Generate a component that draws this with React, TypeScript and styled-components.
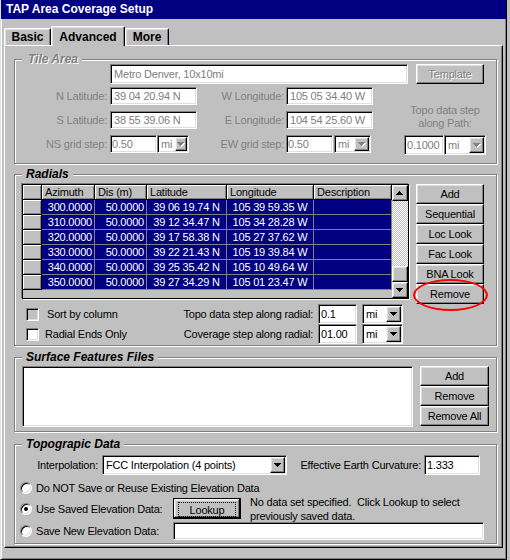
import React from "react";
import styled, { createGlobalStyle, css } from "styled-components";

const GlobalStyle = createGlobalStyle`
  html, body { margin: 0; padding: 0; background: #c0c0c0; }
  body { font-family: "Liberation Sans", Arial, sans-serif; font-size: 11px; color: #000; letter-spacing: -0.2px; }
  *, *::before, *::after { box-sizing: border-box; }
`;

const FONT = `"Liberation Sans", Arial, sans-serif`;

const raised = css`
  border: 1px solid;
  border-color: #fff #000 #000 #fff;
  box-shadow: inset -1px -1px 0 #808080, inset 1px 1px 0 #dfdfdf;
`;

const sunken = css`
  border: 1px solid;
  border-color: #808080 #fff #fff #808080;
  box-shadow: inset 1px 1px 0 #000, inset -1px -1px 0 #dfdfdf;
`;

const Window = styled.div`
  width: 507px;
  height: 560px;
  display: flex;
  flex-direction: column;
  background: #c0c0c0;
  border-left: 1px solid #dfdfdf;
  border-right: 1px solid #000;
  border-bottom: 1px solid #000;
  box-shadow: inset 1px 0 0 #fff, inset -1px -1px 0 #808080;
`;

const TitleBar = styled.div`
  height: 19px;
  padding-left: 5px;
  background: #000080;
  color: #fff;
  font: bold 12px/19px ${FONT};
  letter-spacing: 0;
`;

const Client = styled.div`
  padding: 0 3px;
`;

const TabStrip = styled.div`
  height: 26px;
  display: flex;
  align-items: flex-end;
`;

const Tab = styled.div<{ $active?: boolean; $w: number }>`
  position: relative;
  z-index: ${(p) => (p.$active ? 1 : 0)};
  width: ${(p) => p.$w}px;
  height: ${(p) => (p.$active ? 20 : 17)}px;
  margin-bottom: ${(p) => (p.$active ? -1 : 0)}px;
  background: #c0c0c0;
  border-top: 1px solid #fff;
  border-left: 1px solid #fff;
  border-right: 1px solid #000;
  border-radius: 2px 2px 0 0;
  box-shadow: inset -1px 0 0 #808080, inset 1px 1px 0 #dfdfdf;
  display: flex;
  align-items: center;
  justify-content: center;
  font: bold 12px ${FONT};
  letter-spacing: 0;
`;

const Panel = styled.div`
  border: 1px solid;
  border-color: #fff #000 #000 #fff;
  box-shadow: inset -1px -1px 0 #808080;
  padding: 13px 5px 3px 9px;
  display: flex;
  flex-direction: column;
`;

const Group = styled.div<{ $mt?: number }>`
  position: relative;
  margin-top: ${(p) => p.$mt ?? 0}px;
  border: 1px solid #808080;
  box-shadow: inset 1px 1px 0 #fff, 1px 1px 0 #fff;
`;

const Legend = styled.span<{ $disabled?: boolean }>`
  position: absolute;
  top: -8px;
  left: 7px;
  padding: 0 4px 0 ${(p) => (p.$disabled ? 6 : 4)}px;
  background: #c0c0c0;
  font: italic bold 12px/14px ${FONT};
  letter-spacing: 0;
  color: ${(p) => (p.$disabled ? "#808080" : "#000")};
  text-shadow: ${(p) => (p.$disabled ? "1px 1px 0 #fff" : "none")};
  white-space: nowrap;
`;

/* ---------- generic controls ---------- */

const Field = styled.input<{ $w: number; $h?: number; $muted?: boolean; $px?: number }>`
  ${sunken};
  width: ${(p) => p.$w}px;
  height: ${(p) => p.$h ?? 20}px;
  margin: 0;
  padding: 0 ${(p) => p.$px ?? 3}px;
  background: #fff;
  font: 11px ${FONT};
  letter-spacing: -0.2px;
  color: ${(p) => (p.$muted ? "#808080" : "#000")};
  outline: none;
  flex: none;
`;

const Combo = styled.div<{ $w: number; $h?: number; $muted?: boolean }>`
  ${sunken};
  width: ${(p) => p.$w}px;
  height: ${(p) => p.$h ?? 20}px;
  padding: 1px;
  background: #fff;
  display: flex;
  align-items: stretch;
  flex: none;
  color: ${(p) => (p.$muted ? "#808080" : "#000")};
`;

const ComboText = styled.span`
  flex: 1;
  padding-left: 2px;
  display: flex;
  align-items: center;
  white-space: nowrap;
  overflow: hidden;
`;

const DropBtn = styled.span<{ $w?: number }>`
  ${raised};
  width: ${(p) => p.$w ?? 16}px;
  background: #c0c0c0;
  display: flex;
  align-items: center;
  justify-content: center;
  flex: none;
`;

const Arrow = ({ up, muted }: { up?: boolean; muted?: boolean }) => (
  <svg width="8" height="5" viewBox="0 0 8 5" shapeRendering="crispEdges">
    {muted && (
      <polygon points={up ? "1,5 8,5 4.5,1" : "1,1 8,1 4.5,5"} fill="#fff" />
    )}
    <polygon
      points={up ? "0,4 7,4 3.5,0" : "0,0 7,0 3.5,4"}
      fill={muted ? "#808080" : "#000"}
    />
  </svg>
);

const Select = ({
  w,
  h,
  value,
  muted,
  btn,
}: {
  w: number;
  h?: number;
  value: string;
  muted?: boolean;
  btn?: number;
}) => (
  <Combo $w={w} $h={h} $muted={muted}>
    <ComboText>{value}</ComboText>
    <DropBtn $w={btn}>
      <Arrow muted={muted} />
    </DropBtn>
  </Combo>
);

const Button = styled.button<{ $w?: number; $disabled?: boolean }>`
  ${raised};
  width: ${(p) => (p.$w ? `${p.$w}px` : "100%")};
  height: 20px;
  margin: 0;
  padding: 0;
  background: #c0c0c0;
  font: 11px ${FONT};
  letter-spacing: -0.2px;
  color: ${(p) => (p.$disabled ? "#808080" : "#000")};
  text-shadow: ${(p) => (p.$disabled ? "1px 1px 0 #fff" : "none")};
  flex: none;
`;

const DefaultButton = styled.button`
  width: 68px;
  height: 21px;
  margin: 0;
  padding: 2px;
  border: 1px solid #000;
  background: #c0c0c0;
  box-shadow: inset -1px -1px 0 #000, inset 1px 1px 0 #fff, inset -2px -2px 0 #808080,
    inset 2px 2px 0 #dfdfdf;
  font: 11px ${FONT};
  letter-spacing: -0.2px;
  flex: none;
`;

const FocusRing = styled.span`
  display: flex;
  align-items: center;
  justify-content: center;
  margin: 1px 2px 0 2px;
  border: 1px dotted #000;
  height: 15px;
`;

const Label = styled.span<{ $w?: number; $pr?: number; $muted?: boolean }>`
  ${(p) => (p.$w ? `width: ${p.$w}px;` : "")}
  padding-right: ${(p) => p.$pr ?? 0}px;
  text-align: right;
  white-space: nowrap;
  color: ${(p) => (p.$muted ? "#808080" : "#000")};
  flex: none;
`;

const CheckBox = styled.span<{ $bg?: string }>`
  ${sunken};
  width: 13px;
  height: 13px;
  background: ${(p) => p.$bg ?? "#fff"};
  flex: none;
`;

const RadioDot = styled.span<{ $on?: boolean }>`
  width: 12px;
  height: 12px;
  border-radius: 50%;
  border: 1px solid;
  border-color: #808080 #fff #fff #808080;
  box-shadow: inset 1px 1px 0 #000, inset -1px -1px 0 #dfdfdf;
  background: #fff;
  display: flex;
  align-items: center;
  justify-content: center;
  flex: none;
  &::after {
    content: "";
    width: 4px;
    height: 4px;
    border-radius: 50%;
    background: ${(p) => (p.$on ? "#000" : "transparent")};
  }
`;

/* ---------- Tile Area ---------- */

const TileGrid = styled.div`
  display: grid;
  grid-template-columns: 95px 87px 89px 87px 1fr;
  grid-template-rows: 23px 24px 24px 20px;
  align-items: start;
  padding: 4px 0 8px 0;
`;

const GridLabel = styled(Label)`
  line-height: 18px;
`;

const Inline = styled.div<{ $gap?: number; $span?: string }>`
  display: flex;
  align-items: center;
  gap: ${(p) => p.$gap ?? 0}px;
  ${(p) => (p.$span ? `grid-column: ${p.$span};` : "")}
`;

const PathBlock = styled.div`
  grid-column: 5;
  grid-row: 2 / span 3;
  align-self: stretch;
  padding-left: 21px;
  display: flex;
  flex-direction: column;
  align-items: center;
  justify-content: flex-end;
`;

const PathCaption = styled.div`
  color: #808080;
  text-align: center;
  line-height: 13px;
  margin-bottom: 5px;
`;

/* ---------- Radials ---------- */

const RadialsTop = styled.div`
  display: flex;
  padding: 9px 0 0 7px;
`;

const GridBox = styled.div`
  width: 387px;
  height: 115px;
  border: 1px solid #000;
  box-shadow: -1px -1px 0 #808080, 1px 1px 0 #fff;
  background: #c0c0c0;
  display: flex;
`;

const Table = styled.div`
  flex: 1;
  display: grid;
  grid-template-columns: 19px 53px 52px 80px 87px 78px;
  grid-auto-rows: 15px;
  align-content: start;
`;

const HeadCell = styled.div`
  border-right: 1px solid #000;
  border-bottom: 1px solid #000;
  box-shadow: inset 1px 1px 0 #fff, inset -1px -1px 0 #808080;
  padding-left: 3px;
  line-height: 14px;
  white-space: nowrap;
  overflow: hidden;
`;

const RowHead = styled.div`
  border-right: 1px solid #000;
  border-bottom: 1px solid #000;
  box-shadow: inset 1px 1px 0 #fff, inset -1px -1px 0 #808080;
`;

const Cell = styled.div<{ $align: "right" | "center" | "left" }>`
  background: #000080;
  color: #fff;
  border-right: 1px solid #808080;
  border-bottom: 1px solid #808080;
  line-height: 14px;
  text-align: ${(p) => p.$align};
  padding: 0 2px;
  white-space: nowrap;
  overflow: hidden;
`;

const ScrollBar = styled.div`
  width: 16px;
  display: flex;
  flex-direction: column;
`;

const ScrollBtn = styled.div`
  ${raised};
  height: 16px;
  background: #c0c0c0;
  display: flex;
  align-items: center;
  justify-content: center;
  flex: none;
`;

const Track = styled.div`
  flex: 1;
  background-color: #c0c0c0;
  background-image: conic-gradient(#fff 25%, #c0c0c0 0 50%, #fff 0 75%, #c0c0c0 0);
  background-size: 2px 2px;
`;

const SideButtons = styled.div<{ $w: number; $ml: number }>`
  width: ${(p) => p.$w}px;
  margin-left: ${(p) => p.$ml}px;
  display: flex;
  flex-direction: column;
`;

const Circled = styled.div`
  position: relative;
`;

const RedEllipse = styled.span`
  position: absolute;
  left: -3px;
  top: -5px;
  width: 75px;
  height: 32px;
  border: 2px solid #f00;
  border-radius: 50%;
  pointer-events: none;
`;

const Options = styled.div`
  display: flex;
  padding: 0 0 1px 11px;
`;

const CheckCol = styled.div`
  width: 150px;
  display: flex;
  flex-direction: column;
`;

const CheckRow = styled.div<{ $gap: number }>`
  height: 20px;
  display: flex;
  align-items: center;
  gap: ${(p) => p.$gap}px;
  white-space: nowrap;
`;

const StepGrid = styled.div`
  display: grid;
  grid-template-columns: 137px 39px 41px;
  grid-auto-rows: 20px;
  column-gap: 5px;
  align-items: center;
`;

/* ---------- Surface features ---------- */

const SurfaceBody = styled.div`
  display: flex;
  padding: 8px 0 4px 7px;
`;

const ListBox = styled.div`
  ${sunken};
  width: 391px;
  height: 61px;
  background: #fff;
`;

/* ---------- Topographic ---------- */

const TopoBody = styled.div`
  padding: 10px 0 3px 0;
  display: flex;
  flex-direction: column;
`;

const Row = styled.div<{ $h: number; $mt?: number; $pl?: number }>`
  height: ${(p) => p.$h}px;
  margin-top: ${(p) => p.$mt ?? 0}px;
  padding-left: ${(p) => p.$pl ?? 0}px;
  display: flex;
  align-items: center;
  white-space: nowrap;
`;

const RadioText = styled.span<{ $w?: number }>`
  margin-left: 4px;
  ${(p) => (p.$w ? `width: ${p.$w}px;` : "")}
  flex: none;
`;

const Note = styled.div`
  margin-left: 9px;
  line-height: 14px;
  white-space: pre;
`;

const radials = [
  ["300.0000", "50.0000", "39 06 19.74 N", "105 39 59.35 W"],
  ["310.0000", "50.0000", "39 12 34.47 N", "105 34 28.28 W"],
  ["320.0000", "50.0000", "39 17 58.38 N", "105 27 37.62 W"],
  ["330.0000", "50.0000", "39 22 21.43 N", "105 19 39.84 W"],
  ["340.0000", "50.0000", "39 25 35.42 N", "105 10 49.64 W"],
  ["350.0000", "50.0000", "39 27 34.29 N", "105 01 23.47 W"],
];

export default function App() {
  return (
    <>
      <GlobalStyle />
      <Window>
        <TitleBar>TAP Area Coverage Setup</TitleBar>
        <Client>
          <TabStrip>
            <Tab $w={47}>Basic</Tab>
            <Tab $w={74} $active>
              Advanced
            </Tab>
            <Tab $w={44}>More</Tab>
          </TabStrip>
          <Panel>
            {/* Tile Area */}
            <Group>
              <Legend $disabled>Tile Area</Legend>
              <TileGrid>
                <span />
                <Inline $span="2 / span 4" $gap={8}>
                  <Field $w={298} $muted readOnly value="Metro Denver, 10x10mi" />
                  <Button $w={68} $disabled>
                    Template
                  </Button>
                </Inline>

                <GridLabel $muted $pr={3}>N Latitude:</GridLabel>
                <Field $w={87} $h={18} $muted readOnly value="39 04 20.94 N" />
                <GridLabel $muted $pr={2}>W Longitude:</GridLabel>
                <Field $w={87} $h={18} $muted readOnly value="105 05 34.40 W" />
                <PathBlock>
                  <PathCaption>
                    Topo data step
                    <br />
                    along Path:
                  </PathCaption>
                  <Inline>
                    <Field $w={40} $px={2} $muted readOnly value="0.1000" />
                    <Select w={42} value="mi" muted btn={15} />
                  </Inline>
                </PathBlock>

                <GridLabel $muted $pr={3}>S Latitude:</GridLabel>
                <Field $w={87} $h={18} $muted readOnly value="38 55 39.06 N" />
                <GridLabel $muted $pr={2}>E Longitude:</GridLabel>
                <Field $w={87} $h={18} $muted readOnly value="104 54 25.60 W" />

                <GridLabel $muted $pr={3}>NS grid step:</GridLabel>
                <Inline>
                  <Field $w={47} $h={18} $px={1} $muted readOnly value="0.50" />
                  <Select w={32} h={18} value="mi" muted btn={12} />
                </Inline>
                <GridLabel $muted $pr={2}>EW grid step:</GridLabel>
                <Inline $gap={1}>
                  <Field $w={47} $h={18} $px={1} $muted readOnly value="0.50" />
                  <Select w={37} h={18} value="mi" muted btn={15} />
                </Inline>
              </TileGrid>
            </Group>

            {/* Radials */}
            <Group $mt={10}>
              <Legend>Radials</Legend>
              <RadialsTop>
                <GridBox>
                  <Table>
                    <RowHead />
                    <HeadCell>Azimuth</HeadCell>
                    <HeadCell>Dis (m)</HeadCell>
                    <HeadCell>Latitude</HeadCell>
                    <HeadCell>Longitude</HeadCell>
                    <HeadCell>Description</HeadCell>
                    {radials.map((r) => (
                      <React.Fragment key={r[0]}>
                        <RowHead />
                        <Cell $align="right">{r[0]}</Cell>
                        <Cell $align="right">{r[1]}</Cell>
                        <Cell $align="center">{r[2]}</Cell>
                        <Cell $align="center">{r[3]}</Cell>
                        <Cell $align="left" />
                      </React.Fragment>
                    ))}
                  </Table>
                  <ScrollBar>
                    <ScrollBtn>
                      <Arrow up />
                    </ScrollBtn>
                    <Track />
                    <ScrollBtn />
                    <ScrollBtn>
                      <Arrow />
                    </ScrollBtn>
                  </ScrollBar>
                </GridBox>
                <SideButtons $w={68} $ml={7}>
                  <Button>Add</Button>
                  <Button>Sequential</Button>
                  <Button>Loc Look</Button>
                  <Button>Fac Look</Button>
                  <Button>BNA Look</Button>
                  <Circled>
                    <Button>Remove</Button>
                    <RedEllipse />
                  </Circled>
                </SideButtons>
              </RadialsTop>
              <Options>
                <CheckCol>
                  <CheckRow $gap={8}>
                    <CheckBox $bg="#c0c0c0" />
                    Sort by column
                  </CheckRow>
                  <CheckRow $gap={6}>
                    <CheckBox />
                    Radial Ends Only
                  </CheckRow>
                </CheckCol>
                <StepGrid>
                  <Label>Topo data step along radial:</Label>
                  <Field $w={39} $px={2} readOnly value="0.1" />
                  <Select w={41} value="mi" btn={15} />
                  <Label>Coverage step along radial:</Label>
                  <Field $w={39} $px={2} readOnly value="01.00" />
                  <Select w={41} value="mi" btn={15} />
                </StepGrid>
              </Options>
            </Group>

            {/* Surface features */}
            <Group $mt={11}>
              <Legend>Surface Features Files</Legend>
              <SurfaceBody>
                <ListBox />
                <SideButtons $w={69} $ml={7}>
                  <Button>Add</Button>
                  <Button>Remove</Button>
                  <Button>Remove All</Button>
                </SideButtons>
              </SurfaceBody>
            </Group>

            {/* Topographic data */}
            <Group $mt={12}>
              <Legend>Topograpic Data</Legend>
              <TopoBody>
                <Row $h={20}>
                  <Label $w={87} $pr={4}>
                    Interpolation:
                  </Label>
                  <Select w={185} value="FCC Interpolation (4 points)" btn={15} />
                  <Label $w={137} $pr={3}>
                    Effective Earth Curvature:
                  </Label>
                  <Field $w={56} $px={2} readOnly value="1.333" />
                </Row>
                <Row $h={18} $mt={4} $pl={5}>
                  <RadioDot />
                  <RadioText>Do NOT Save or Reuse Existing Elevation Data</RadioText>
                </Row>
                <Row $h={21} $mt={1} $pl={5}>
                  <RadioDot $on />
                  <RadioText $w={137}>Use Saved Elevation Data:</RadioText>
                  <DefaultButton>
                    <FocusRing>Lookup</FocusRing>
                  </DefaultButton>
                  <Note>
                    {"No data set specified.  Click Lookup to select\npreviously saved data."}
                  </Note>
                </Row>
                <Row $h={18} $mt={3} $pl={5}>
                  <RadioDot />
                  <RadioText $w={137}>Save New Elevation Data:</RadioText>
                  <Field $w={311} $h={18} readOnly value="" />
                </Row>
              </TopoBody>
            </Group>
          </Panel>
        </Client>
      </Window>
    </>
  );
}
